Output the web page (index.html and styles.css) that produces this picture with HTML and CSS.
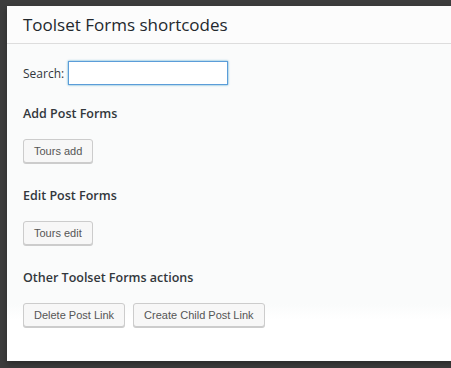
FILE: index.html
```html
<!DOCTYPE html>
<html lang="en">
<head>
    <meta charset="UTF-8">
    <title>Toolset Forms shortcodes</title>
    <link rel="stylesheet" href="styles.css">
</head>
<body>
    <div class="dialog">
        <div class="dialog-title">
            <h1>Toolset Forms shortcodes</h1>
        </div>
        <div class="dialog-body">
            <div class="search-row">
                <label for="search">Search:</label>
                <input type="text" id="search" autofocus>
            </div>

            <h2>Add Post Forms</h2>
            <div class="btn-group">
                <button class="btn">Tours add</button>
            </div>

            <h2>Edit Post Forms</h2>
            <div class="btn-group">
                <button class="btn">Tours edit</button>
            </div>

            <h2>Other Toolset Forms actions</h2>
            <div class="btn-group">
                <button class="btn">Delete Post Link</button>
                <button class="btn">Create Child Post Link</button>
            </div>
        </div>
    </div>
</body>
</html>
```

FILE: styles.css
```css
* {
    margin: 0;
    padding: 0;
    box-sizing: border-box;
}

html, body {
    height: 100%;
}

body {
    background-color: #3d3d3d;
    font-family: "Open Sans", sans-serif;
    color: #32373c;
    padding: 6px 0 0 7px;
    overflow: hidden;
}

.dialog {
    background-color: #fff;
    width: 460px;
    height: 355px;
    display: flex;
    flex-direction: column;
    box-shadow: 0 3px 6px rgba(0,0,0,0.3);
}

.dialog-title {
    background-color: #fcfcfc;
    border-bottom: 1px solid #dddddd;
    height: 38px;
    padding: 0 0 0 16px;
    display: flex;
    align-items: center;
}

.dialog-title h1 {
    font-size: 17px;
    font-weight: 400;
    color: #23282d;
}

.dialog-body {
    flex: 1;
    padding: 17px 16px 0 16px;
    background: linear-gradient(to bottom, #fafbfb 0%, #fafbfb 82%, #ffffff 87%, #ffffff 100%);
}

.search-row {
    display: flex;
    align-items: center;
    gap: 4px;
    font-size: 12px;
    margin-bottom: 20px;
}

.search-row input {
    width: 160px;
    height: 24px;
    border: 1px solid #5b9dd9;
    box-shadow: 0 0 2px rgba(30,140,190,0.8);
    outline: none;
    padding: 0 6px;
    background: #fff;
    caret-color: #222;
}

h2 {
    font-size: 12.5px;
    font-weight: 600;
    color: #32373c;
    margin-bottom: 17px;
}

.btn-group {
    display: flex;
    gap: 8px;
    margin-bottom: 24px;
}

.btn {
    font-family: "Liberation Sans", Arial, sans-serif;
    font-size: 11px;
    color: #555;
    background-color: #f7f7f7;
    border: 1px solid #cccccc;
    border-radius: 3px;
    box-shadow: 0 1px 0 #cccccc;
    height: 24px;
    padding: 0 10px;
    cursor: pointer;
}
```
